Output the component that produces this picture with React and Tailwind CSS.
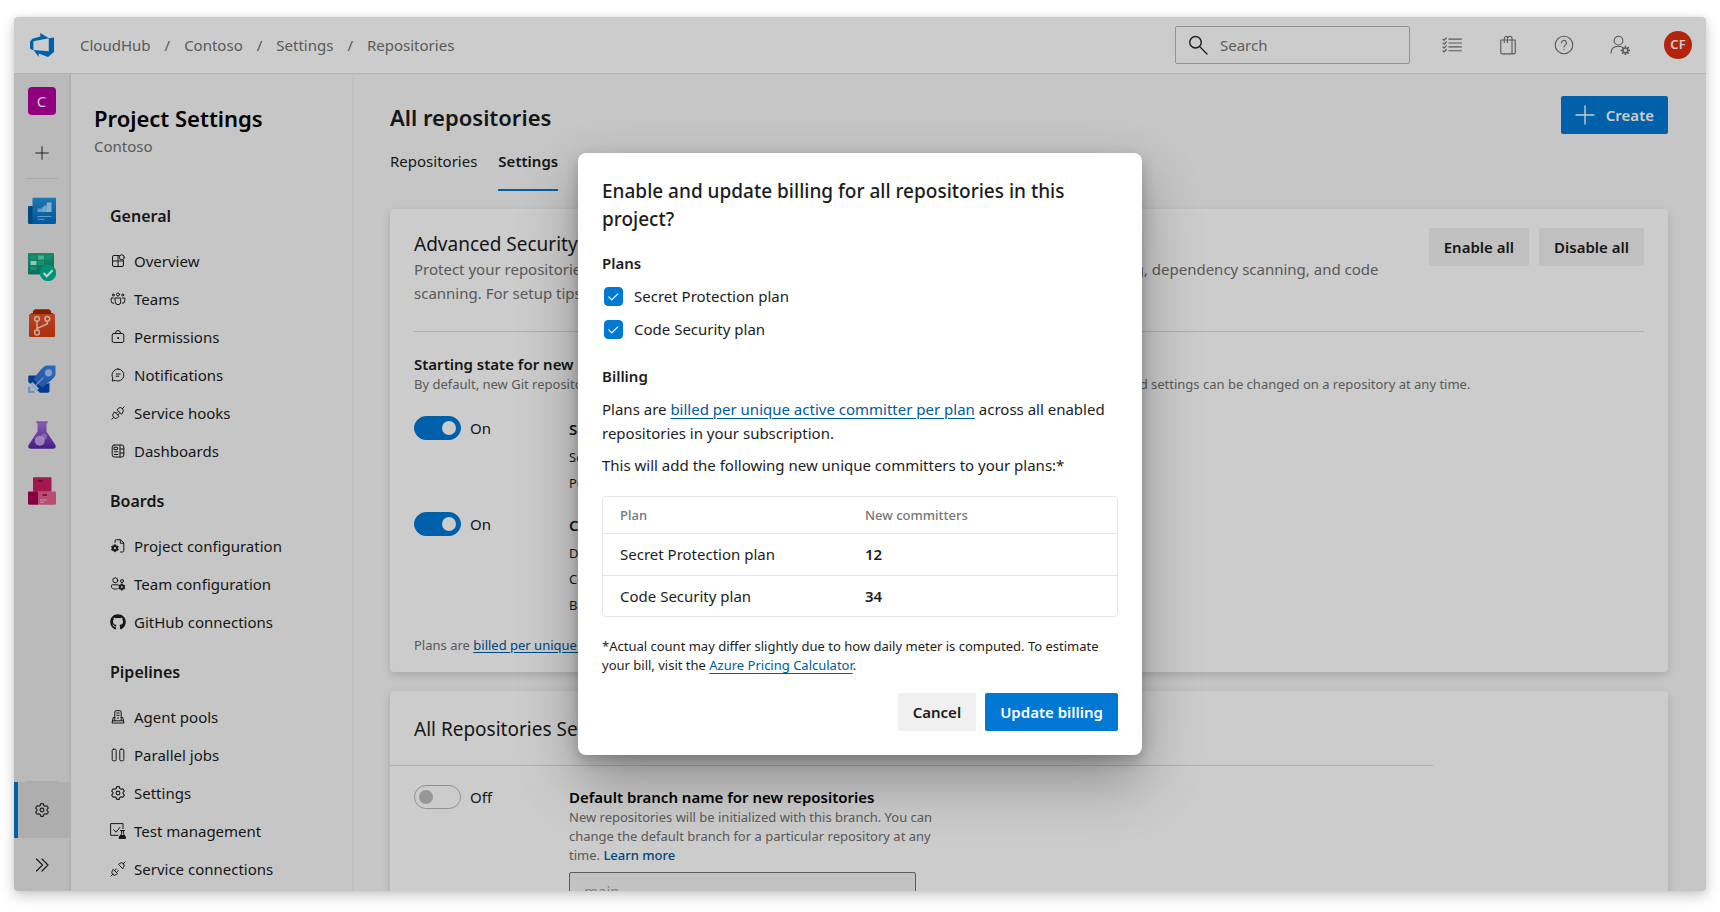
import React from "react";
import { FaGithub } from "react-icons/fa";

function Line({ size = "size-4", children, box = "0 0 16 16", w = 1 }) {
  return (
    <svg viewBox={box} className={`${size} shrink-0`} fill="none" stroke="currentColor" strokeWidth={w} strokeLinecap="round" strokeLinejoin="round" aria-hidden="true">
      {children}
    </svg>
  );
}

const GEAR =
  "M6.6 1.8 Q8 1.4 9.4 1.8 L9.8 3.5 L11.2 4.3 L12.9 3.8 Q13.9 4.8 14.3 6.2 L13 7.4 V8.6 L14.3 9.8 Q13.9 11.2 12.9 12.2 L11.2 11.7 L9.8 12.5 L9.4 14.2 Q8 14.6 6.6 14.2 L6.2 12.5 L4.8 11.7 L3.1 12.2 Q2.1 11.2 1.7 9.8 L3 8.6 V7.4 L1.7 6.2 Q2.1 4.8 3.1 3.8 L4.8 4.3 L6.2 3.5 Z";

const GearIcon = ({ size }) => (
  <Line size={size} w={1.1}>
    <path d={GEAR} />
    <circle cx="8" cy="8" r="1.9" />
  </Line>
);

function SmallGear({ x, y, s = 0.5 }) {
  return (
    <g transform={`translate(${x} ${y}) scale(${s})`}>
      <path d={GEAR} fill="currentColor" strokeWidth="1.4" />
      <circle cx="8" cy="8" r="2" fill="#f8f8f8" stroke="none" />
    </g>
  );
}

const OverviewIcon = () => (
  <Line>
    <path d="M9 2.5H4A1.5 1.5 0 0 0 2.500 4v8A1.500 1.500 0 0 0 4 13.500h8a1.500 1.500 0 0 0 1.500-1.500V7.500M2.500 8h11M8 2.500v11" />
    <circle cx="11.800" cy="4.300" r="2.500" />
  </Line>
);
const TeamsIcon = () => (
  <Line>
    <circle cx="8" cy="3.500" r="1.500" />
    <circle cx="3.300" cy="4" r="1" />
    <circle cx="12.700" cy="4" r="1" />
    <path d="M5.300 7h5.400v4a2.700 2.700 0 0 1-5.400 0zM3.400 7H1.200v2.800a2.400 2.400 0 0 0 2.600 2.500M12.600 7h2.200v2.800a2.400 2.400 0 0 1-2.600 2.500" />
  </Line>
);
const LockIcon = () => (
  <Line>
    <rect x="2.200" y="4.500" width="11.600" height="9" rx="1.600" />
    <path d="M5.300 4.500a2.700 3 0 0 1 5.400 0" />
    <circle cx="8" cy="9" r=".5" fill="currentColor" />
  </Line>
);
const ChatIcon = () => (
  <Line>
    <path d="M8 2a6 6 0 1 1-2.700 11.400L2.200 14l.6-3.100A6 6 0 0 1 8 2zM6.200 7h4M6.200 9.200h2.600" />
  </Line>
);
const PlugIcon = () => (
  <Line>
    <path d="M1.800 14.200l2-2M14.200 1.800l-2 2M4.700 7l4.300 4.300-1.400 1.300a2.700 2.700 0 0 1-3.800 0l-.4-.4a2.700 2.700 0 0 1 0-3.800zM11.300 9L7 4.700l1.400-1.300a2.700 2.700 0 0 1 3.800 0l.4.4a2.700 2.700 0 0 1 0 3.800zM6.300 8.200l1.400-1.400M8 9.800l1.400-1.400" />
  </Line>
);
const UnpluggedIcon = () => (
  <Line>
    <path d="M.9 15.100l2-2M15.100.9l-2 2M3.400 8.500l4.100 4.100-1.100.9a2.500 2.500 0 0 1-3.500 0l-.4-.4a2.500 2.500 0 0 1 0-3.500zM12.600 7.500L8.500 3.400l1.100-.9a2.500 2.500 0 0 1 3.500 0l.4.400a2.500 2.500 0 0 1 0 3.500zM4.600 9.700l1.900-1.900M6.400 11.500l1.900-1.900" />
  </Line>
);
const DashboardIcon = () => (
  <Line>
    <rect x="2.200" y="2" width="11.600" height="12" rx="2" />
    <path d="M10 2v12M10 6h3.800M10 10h3.800M4.300 8.800h3.500M4.300 11.500h3.500" />
    <rect x="4.400" y="4.200" width="3.200" height="2.400" />
  </Line>
);
const ProjectConfigIcon = () => (
  <Line>
    <path d="M5 4.500V3A1.300 1.300 0 0 1 6.300 1.700H10.500L13.800 5v7.700a1.300 1.300 0 0 1-1.300 1.300H10.500M10.300 2v3.200h3.300" />
    <SmallGear x="0.500" y="5.800" s={0.55} />
  </Line>
);
const TeamConfigIcon = () => (
  <Line>
    <circle cx="5.300" cy="4.300" r="2.500" />
    <circle cx="12" cy="5" r="1.500" />
    <path d="M8 8.800H2.600a1.300 1.300 0 0 0-1.300 1.300c0 2 1.700 3 4 3 .8 0 1.500-.1 2-.3" />
    <SmallGear x="7.800" y="7" s={0.5} />
  </Line>
);
const AgentIcon = () => (
  <Line>
    <path d="M4.800 11.300V2.800c0-.7.400-1.100 1.100-1.100h4.200c.7 0 1.100.4 1.100 1.100v8.500M4.800 8.500H3.200L2 14h12l-1.200-5.500h-1.600M2.400 11.800h11.200M6.800 4h2.400M6.800 6.300h2.400M7.300 9h1.400" />
  </Line>
);
const ParallelIcon = () => (
  <Line>
    <rect x="2.200" y="2.200" width="4" height="11.600" rx="1.300" />
    <rect x="9.800" y="2.200" width="4" height="11.600" rx="1.300" />
  </Line>
);
const TestIcon = () => (
  <Line>
    <path d="M8 12.300H.6V.6H13v5M3.600 6.800l2.500 2.400L10 4.300" />
    <path d="M10.500 7.500h4M11.600 7.500v3L9.300 15.200h6.400l-2.300-4.700v-3" />
    <path d="M10.600 12.500h3.800l1.300 2.700H9.300z" fill="currentColor" />
  </Line>
);
const PlusIcon = ({ size }) => (
  <Line size={size} w={1.1}>
    <path d="M8 .8v14.400M.8 8h14.400" />
  </Line>
);

/* Service logos of the rail */
const OverviewLogo = () => (
  <svg viewBox="0 0 28 28" className="size-7" aria-hidden="true">
    <defs>
      <linearGradient id="ov" x1="0" y1="0" x2="0" y2="1"><stop offset="0" stopColor="#2497dc" /><stop offset="1" stopColor="#006ccb" /></linearGradient>
    </defs>
    <path d="M0 10a1 1 0 0 1 1-1h5v18H1.500A1.500 1.500 0 0 1 0 25.500z" fill="#005ba1" />
    <path d="M4.500 1.500a.8.800 0 0 1 .8-.8H27.200a.8.800 0 0 1 .8.800v24a1.500 1.500 0 0 1-1.500 1.500H3.500a1.500 1.500 0 0 0 1-1.500z" fill="url(#ov)" />
    <path d="M9.500 11.500h4.700V15H9.500zM14.200 10h4.500v5h-4.500z" fill="#7cc4f0" />
    <path d="M14.200 10h1.500V8.500h3V15h-4.500z" fill="#8fd0f6" />
    <path d="M18.700 5.500h4.800V15h-4.800z" fill="#a8dcfa" />
    <path d="M9.500 19.500h14M9.500 22.300h7" stroke="#7cc4f0" strokeWidth="1" />
  </svg>
);
const BoardsLogo = () => (
  <svg viewBox="0 0 28 28" className="size-7" aria-hidden="true">
    <defs>
      <linearGradient id="bd" x1="0" y1="0" x2="0" y2="1"><stop offset="0" stopColor="#1eaa80" /><stop offset="1" stopColor="#0b8a72" /></linearGradient>
    </defs>
    <rect width="26" height="21.500" rx="1" fill="url(#bd)" />
    <path d="M2.500 2.500h6v4h-6zM17.500 2.500h6v4h-6zM10 8h6v4h-6zM2.500 13.500h6v3.500h-6z" fill="#19b892" />
    <path d="M10 2.500h6v4h-6z" fill="#5fdcb8" />
    <path d="M2.500 8h6v4h-6z" fill="#b9f5e2" />
    <circle cx="20" cy="20" r="8.200" fill="#00b797" />
    <path d="M15.500 20l3.300 3.300 5.800-6" fill="none" stroke="#fff" strokeWidth="2" />
  </svg>
);
const ReposLogo = () => (
  <svg viewBox="0 0 28 28" className="size-7" aria-hidden="true">
    <defs>
      <linearGradient id="rp" x1="0" y1="0" x2="0" y2="1"><stop offset="0" stopColor="#e8562c" /><stop offset="1" stopColor="#dc3a10" /></linearGradient>
    </defs>
    <path d="M7 .3h14l2 1.700v2h1.500l2 2h-25l2-2H5V2z" fill="#a82608" />
    <rect x="1" y="5" width="26" height="23" rx="1.200" fill="url(#rp)" />
    <g fill="none" stroke="#ffd6c8" strokeWidth="1.500">
      <circle cx="9" cy="9.800" r="2.400" />
      <circle cx="19.300" cy="9.800" r="2.400" />
      <circle cx="9" cy="23.500" r="2.400" />
      <path d="M9 12.200v8.900M19.300 12.200v2.600L9 19.600" />
    </g>
  </svg>
);
const PipelinesLogo = () => (
  <svg viewBox="0 0 28 28" className="size-7" aria-hidden="true">
    <defs>
      <linearGradient id="pp" x1="0" y1="1" x2="1" y2="0"><stop offset="0" stopColor="#2a67c9" /><stop offset="1" stopColor="#3c86ee" /></linearGradient>
    </defs>
    <path d="M1 10.500h9.500L7 17.500 3.500 20 .3 17V11.200zM21.500 18v8.500l-1.300 1.200h-8.500L9 24.500l2.500-3.500z" fill="#004cb3" />
    <path d="M4 12l12 12-2 2.500-6-1.500-4.500-6z" fill="#004cb3" />
    <path d="M18 .5h9.500v9.500c-1 3-8 8.500-13.500 12.500L5.500 14C9.500 8.500 15 1.500 18 .5z" fill="url(#pp)" />
    <circle cx="20.500" cy="7.800" r="3.600" fill="#a9c8f8" />
    <path d="M15.500 12.500L7.500 20.500" stroke="#8db4f2" strokeWidth="1.300" />
    <path d="M4.500 17l6.500 6.500-2 2-2.500-1.800-3.500.3.300-3.500-1.300-1.500z" fill="#c3d8fa" />
    <path d="M1.200 21.500v5.300h5.300" fill="none" stroke="#8db4f2" strokeWidth="2.200" />
  </svg>
);
const TestLogo = () => (
  <svg viewBox="0 0 28 28" className="size-7" aria-hidden="true">
    <defs>
      <linearGradient id="tl" x1="0" y1="0" x2="0" y2="1"><stop offset="0" stopColor="#a877dc" /><stop offset="1" stopColor="#5a22a6" /></linearGradient>
    </defs>
    <path d="M9.500 1.500h9v9l8.700 13.200c1.300 2.300.3 4.100-2.200 4.100H3c-2.500 0-3.500-1.800-2.200-4.100L9.500 10.500z" fill="url(#tl)" />
    <rect x="8.300" y=".3" width="11.400" height="2" rx=".6" fill="#a06ad8" />
    <circle cx="11.800" cy="19.800" r="5" fill="#d3b3f5" opacity=".85" />
    <circle cx="16" cy="15.800" r="3" fill="#d3b3f5" opacity=".5" />
  </svg>
);
const ArtifactsLogo = () => (
  <svg viewBox="0 0 28 28" className="size-7" aria-hidden="true">
    <rect x="5" y=".2" width="18.500" height="14.500" rx=".8" fill="#cc1f63" />
    <path d="M0 15.300a.8.800 0 0 1 .8-.8H10v13.300H1.500A1.500 1.500 0 0 1 0 26.300z" fill="#ad0055" />
    <path d="M10 14.500h17.200a.8.800 0 0 1 .8.800v11a1.500 1.500 0 0 1-1.500 1.500H10z" fill="#e8608f" />
    <path d="M10 3h4.500v1.700H10zM3.500 17.200H8v1.600H3.500zM14.500 17.200h4.500v1.600h-4.500z" fill="#8d003f" />
    <path d="M12 23h7M12 25.300h4" stroke="#ffb8d2" strokeWidth="1" />
  </svg>
);

const SECTIONS = [
  { title: "General", items: [["Overview", OverviewIcon], ["Teams", TeamsIcon], ["Permissions", LockIcon], ["Notifications", ChatIcon], ["Service hooks", PlugIcon], ["Dashboards", DashboardIcon]] },
  { title: "Boards", items: [["Project configuration", ProjectConfigIcon], ["Team configuration", TeamConfigIcon], ["GitHub connections", () => <FaGithub className="size-4 shrink-0" />]] },
  { title: "Pipelines", items: [["Agent pools", AgentIcon], ["Parallel jobs", ParallelIcon], ["Settings", GearIcon], ["Test management", TestIcon], ["Service connections", UnpluggedIcon]] },
];

const RAIL = [
  ["Overview", OverviewLogo],
  ["Boards", BoardsLogo],
  ["Repos", ReposLogo],
  ["Pipelines", PipelinesLogo],
  ["Test Plans", TestLogo],
  ["Artifacts", ArtifactsLogo],
];

function Header() {
  const crumbs = ["CloudHub", "Contoso", "Settings", "Repositories"];
  return (
    <header className="flex h-[57px] shrink-0 items-center border-b border-[#e0e0e0] bg-white pr-3.5 pl-4 text-[#717171]">
      <svg viewBox="1 1 14 14" className="size-6 shrink-0" fill="#0078d4" aria-label="Azure DevOps">
        <path d="M15 3.622v8.512L11.500 15l-5.425-1.975v1.958L3.004 10.970l8.951.7V4.005L15 3.622zm-2.984.428L6.994 1v2.001L2.382 4.356 1 6.130v4.029l1.978.873V5.869l9.038-1.818z" />
      </svg>
      <nav aria-label="Breadcrumb" className="ml-[26px] flex gap-3.5 text-[15px]">
        {crumbs.map((c, i) => (
          <React.Fragment key={c}>
            {i > 0 && <span>/</span>}
            <a href="#">{c}</a>
          </React.Fragment>
        ))}
      </nav>
      <label className="ml-auto flex h-[38px] w-[235px] items-center gap-3 rounded-xs border border-[#b8b8b8] px-3 text-[#222]">
        <Line size="size-5" w={1.1}>
          <circle cx="6" cy="5.800" r="4.600" />
          <path d="M9.400 9.300l5.800 5.900" />
        </Line>
        <input aria-label="Search" placeholder="Search" className="w-full min-w-0 bg-transparent text-[15px] outline-none placeholder:text-[#767676]" />
      </label>
      <div className="ml-8 flex items-center gap-9">
        <button aria-label="Work items">
          <Line size="size-5">
            <path d="M5.500 3.300h10M5.500 6.400h10M5.500 9.500h10M5.500 12.600h10M.8 3.400l.9.900 1.800-2M.8 6.500l.9.900 1.800-2M.8 9.600l.9.900 1.800-2M.8 12.700l.9.900 1.800-2" strokeWidth=".9" />
          </Line>
        </button>
        <button aria-label="Marketplace">
          <Line size="size-5">
            <path d="M2.200 4h11.600v9.800a1.300 1.300 0 0 1-1.300 1.300h-9a1.300 1.300 0 0 1-1.300-1.300zM11.200 4v11M5 6V2.800A1.800 1.800 0 0 1 8.300 2M7.500 6V2.800a1.800 1.800 0 0 1 3.700 0V4" strokeWidth=".9" />
          </Line>
        </button>
        <button aria-label="Help">
          <Line size="size-5" w={0.9}>
            <circle cx="8" cy="8" r="7" />
            <path d="M6 6.400a2 2 0 1 1 3 1.700c-.7.400-1 .8-1 1.500M8 11.500v.1" />
          </Line>
        </button>
        <button aria-label="User settings">
          <Line size="size-5" w={0.9}>
            <circle cx="6.800" cy="4.500" r="3.500" />
            <path d="M.8 14.500c.2-3.200 2.400-5.500 6-5.500.8 0 1.500.1 2.200.4" />
            <circle cx="12.300" cy="12.300" r="1.900" />
            <path d="M12.300 9v1.300M12.300 14.300v1.300M9 12.300h1.300M14.300 12.300h1.300M10 10l.9.900M13.700 13.700l.9.900M10 14.600l.9-.9M13.700 10.900l.9-.9" strokeWidth="1.300" />
          </Line>
        </button>
        <button className="-ml-0.5 size-7 rounded-full bg-[#df2e12] text-[13px] font-semibold text-white">CF</button>
      </div>
    </header>
  );
}

function Rail() {
  return (
    <nav aria-label="Services" className="flex w-[57px] shrink-0 flex-col items-center border-r-2 border-[#dcdcdc] bg-[#e9e9e9] text-[#222]">
      <a href="#" aria-label="Contoso" className="flex h-[54px] items-center">
        <span className="flex size-7 items-center justify-center rounded bg-[#b4009e] text-[15px] text-white">C</span>
      </a>
      <button aria-label="Add" className="flex h-[50px] items-center"><PlusIcon size="size-3.5" /></button>
      <hr className="mb-1 w-8 border-[#d4d4d4]" />
      {RAIL.map(([name, Logo]) => (
        <a key={name} href="#" aria-label={name} className="flex h-14 shrink-0 items-center"><Logo /></a>
      ))}
      <hr className="mt-auto w-8 border-[#d4d4d4]" />
      <a href="#" aria-label="Project settings" className="flex h-14 w-full shrink-0 items-center justify-center border-l-4 border-[#0078d4] bg-[#dadada] pr-1">
        <GearIcon size="size-4" />
      </a>
      <button aria-label="Expand" className="flex h-[53px] shrink-0 items-center">
        <Line w={1.200}><path d="M2.500 2l6 6-6 6M8 2l6 6-6 6" /></Line>
      </button>
    </nav>
  );
}

function Sidebar() {
  return (
    <aside className="w-[283px] shrink-0 border-r-2 border-[#f0f0f0] pl-[23px] text-[#1c1c1c]">
      <h2 className="pt-7 text-[22px] leading-8 font-semibold text-black">Project Settings</h2>
      <p className="text-[15px] leading-6 text-[#717171]">Contoso</p>
      <nav aria-label="Project settings" className="mt-[46px] flex flex-col gap-[19px] pl-4">
        {SECTIONS.map((s) => (
          <section key={s.title}>
            <h3 className="text-base leading-6 font-semibold">{s.title}</h3>
            <ul className="mt-3.5">
              {s.items.map(([name, Icon]) => (
                <li key={name}>
                  <a href="#" className="flex h-[38px] items-center gap-2 text-[15px]">
                    <Icon />
                    {name}
                  </a>
                </li>
              ))}
            </ul>
          </section>
        ))}
      </nav>
    </aside>
  );
}

function Toggle({ label, on }) {
  return (
    <label className="flex h-6 w-[155px] shrink-0 items-center gap-[9px] text-[15px]">
      <input
        type="checkbox"
        role="switch"
        defaultChecked={on}
        className="flex h-6 w-[47px] appearance-none items-center rounded-full border border-[#b8b8b8] px-1 before:size-3.5 before:rounded-full before:bg-[#bdbdbd] before:content-[''] checked:justify-end checked:border-[#0078d4] checked:bg-[#0078d4] checked:before:bg-white"
      />
      {label}
    </label>
  );
}

function PlanRow({ title, lines }) {
  return (
    <div className="flex">
      <Toggle label="On" on />
      <div className="pt-px">
        <h4 className="text-[15px] leading-6 font-semibold">{title}</h4>
        <ul className="mt-[3px] text-[13px] leading-[26px]">
          {lines.map((l) => <li key={l}>{l}</li>)}
        </ul>
      </div>
    </div>
  );
}

function Content() {
  return (
    <main className="min-w-0 flex-1 pt-[22px] pr-[38px] pl-9 text-[#1c1c1c]">
      <div className="flex h-[38px] items-end justify-between">
        <h1 className="text-[22px] leading-[34px] font-semibold">All repositories</h1>
        <button className="flex h-[38px] items-center gap-[11px] rounded-xs bg-[#0078d4] px-3.5 text-[15px] font-semibold text-white">
          <PlusIcon size="size-5" />
          Create
        </button>
      </div>
      <nav aria-label="Views" className="mt-[15px] flex gap-[21px] text-[15px] leading-6">
        <a href="#" className="pb-4">Repositories</a>
        <a href="#" className="border-b-2 border-[#0078d4] pb-4 font-semibold">Settings</a>
      </nav>

      <section className="mt-[18px] rounded bg-white px-6 pb-[17px] shadow-[0_3px_8px_rgba(0,0,0,0.16)]">
        <div className="flex justify-between border-b border-[#dadada] pt-[19px] pb-[26px]">
          <div className="max-w-[1000px] pt-[3px]">
            <h2 className="text-[19px] leading-[26px]">Advanced Security</h2>
            <p className="text-[15px] leading-6 text-[#717171]">
              Protect your repositories by enabling Advanced Security features in this project, such as secret scanning, dependency scanning, and code scanning. For setup tips, read the documentation.
            </p>
          </div>
          <div className="flex shrink-0 gap-2.5 text-[15px] font-semibold">
            <button className="h-[38px] rounded-xs bg-[#f0f0f0] px-[15px]">Enable all</button>
            <button className="h-[38px] rounded-xs bg-[#f0f0f0] px-[15px]">Disable all</button>
          </div>
        </div>
        <h3 className="mt-[21px] text-[15px] leading-[22px] font-semibold">Starting state for new repositories</h3>
        <p className="text-[13px] leading-[18px] text-[#717171]">
          By default, new Git repositories in this project start with the plans selected below. Plans can be turned on or off here and settings can be changed on a repository at any time.
        </p>
        <div className="mt-[23px] flex flex-col gap-4">
          <PlanRow title="Secret Protection" lines={["Secret scanning", "Push protection"]} />
          <PlanRow title="Code Security" lines={["Dependency alerts", "Code scanning", "Branch protection"]} />
        </div>
        <p className="mt-[17px] text-[13px] leading-5 text-[#717171]">
          Plans are <a href="#" className="text-[#005a9e] underline underline-offset-2">billed per unique active committer</a>
        </p>
      </section>

      <section className="mt-[19px] rounded bg-white shadow-[0_3px_8px_rgba(0,0,0,0.16)]">
        <h2 className="mr-[235px] border-b border-[#dadada] px-6 pt-6 pb-[22px] text-[19px] leading-7">All Repositories Settings</h2>
        <div className="flex px-6 pt-[19px] pb-8">
          <Toggle label="Off" />
          <div className="w-[380px]">
            <h3 className="pt-px text-[15px] leading-[22px] font-semibold text-black">Default branch name for new repositories</h3>
            <p className="text-[13px] leading-[19px] text-[#717171]">
              New repositories will be initialized with this branch. You can change the default branch for a particular repository at any time. <a href="#" className="font-medium text-[#005a9e]">Learn more</a>
            </p>
            <input aria-label="Default branch name" placeholder="main" className="mt-[7px] h-[38px] w-[347px] rounded-xs border border-[#757575] bg-[#f3f3f3] px-3.5 text-[15px] placeholder:text-[#a0a0a0]" />
          </div>
        </div>
      </section>
    </main>
  );
}

function PlanCheck({ label }) {
  return (
    <label className="flex h-6 items-center gap-[11px]">
      <span className="ml-0.5 grid">
        <input type="checkbox" defaultChecked className="col-start-1 row-start-1 size-[19px] appearance-none rounded border border-[#0078d4] checked:bg-[#0078d4]" />
        <svg viewBox="0 0 19 19" className="pointer-events-none col-start-1 row-start-1 size-[19px]" fill="none" stroke="#fff" strokeWidth="1.200" strokeLinecap="round" strokeLinejoin="round" aria-hidden="true">
          <path d="M4.800 9.800l3 3 6-6" />
        </svg>
      </span>
      {label}
    </label>
  );
}

function BillingDialog() {
  return (
    <div role="dialog" aria-modal="true" aria-labelledby="dialog-title" className="w-[564px] rounded-lg bg-white px-6 py-6 text-[15px] leading-6 text-[#1c1c1c] shadow-[0_26px_58px_rgba(0,0,0,0.3),0_5px_14px_rgba(0,0,0,0.22)]">
      <h2 id="dialog-title" className="text-[19px] leading-7 font-medium">Enable and update billing for all repositories in this project?</h2>
      <fieldset className="mt-[18px]">
        <legend className="mb-[9px] font-semibold">Plans</legend>
        <div className="flex flex-col gap-[9px]">
          <PlanCheck label="Secret Protection plan" />
          <PlanCheck label="Code Security plan" />
        </div>
      </fieldset>
      <h3 className="mt-[23px] font-semibold">Billing</h3>
      <p className="mt-[9px]">
        Plans are <a href="#" className="text-[#005a9e] underline underline-offset-3">billed per unique active committer per plan</a> across all enabled repositories in your subscription.
      </p>
      <p className="mt-2">This will add the following new unique committers to your plans:*</p>
      <div className="mt-[19px] rounded border border-[#e6e6e6]">
        <table className="w-full table-fixed text-left">
          <thead>
            <tr className="h-9 border-b border-[#e6e6e6] text-[13px] text-[#767676]">
              <th className="w-[245px] pl-[17px] font-medium">Plan</th>
              <th className="pl-[17px] font-medium">New committers</th>
            </tr>
          </thead>
          <tbody>
            <tr className="h-[42px] border-b border-[#e6e6e6]">
              <td className="pl-[17px]">Secret Protection plan</td>
              <td className="pl-[17px] font-semibold">12</td>
            </tr>
            <tr className="h-[41px]">
              <td className="pl-[17px]">Code Security plan</td>
              <td className="pl-[17px] font-semibold">34</td>
            </tr>
          </tbody>
        </table>
      </div>
      <p className="mt-5 text-[13px] leading-[19px]">
        *Actual count may differ slightly due to how daily meter is computed. To estimate your bill, visit the <a href="#" className="text-[#005a9e] underline underline-offset-3">Azure Pricing Calculator</a>.
      </p>
      <div className="mt-[18px] flex justify-end gap-[9px] font-semibold">
        <button className="h-[38px] rounded-xs bg-[#f0f0f0] px-[15px]">Cancel</button>
        <button className="h-[38px] rounded-xs bg-[#0078d4] px-[15px] text-white">Update billing</button>
      </div>
    </div>
  );
}

export default function App() {
  return (
    <div className="flex h-screen bg-white px-3.5 pt-[17px] pb-[21px] font-['Noto_Sans','Open_Sans',sans-serif]">
      <div className="relative flex min-w-0 flex-1 flex-col overflow-hidden rounded bg-[#f8f8f8] shadow-[0_5px_14px_rgba(0,0,0,0.2),0_0_6px_rgba(0,0,0,0.08)]">
        <Header />
        <div className="flex min-h-0 flex-1">
          <Rail />
          <Sidebar />
          <Content />
        </div>
        <div className="absolute inset-0 flex items-center justify-center bg-black/20">
          <BillingDialog />
        </div>
      </div>
    </div>
  );
}
